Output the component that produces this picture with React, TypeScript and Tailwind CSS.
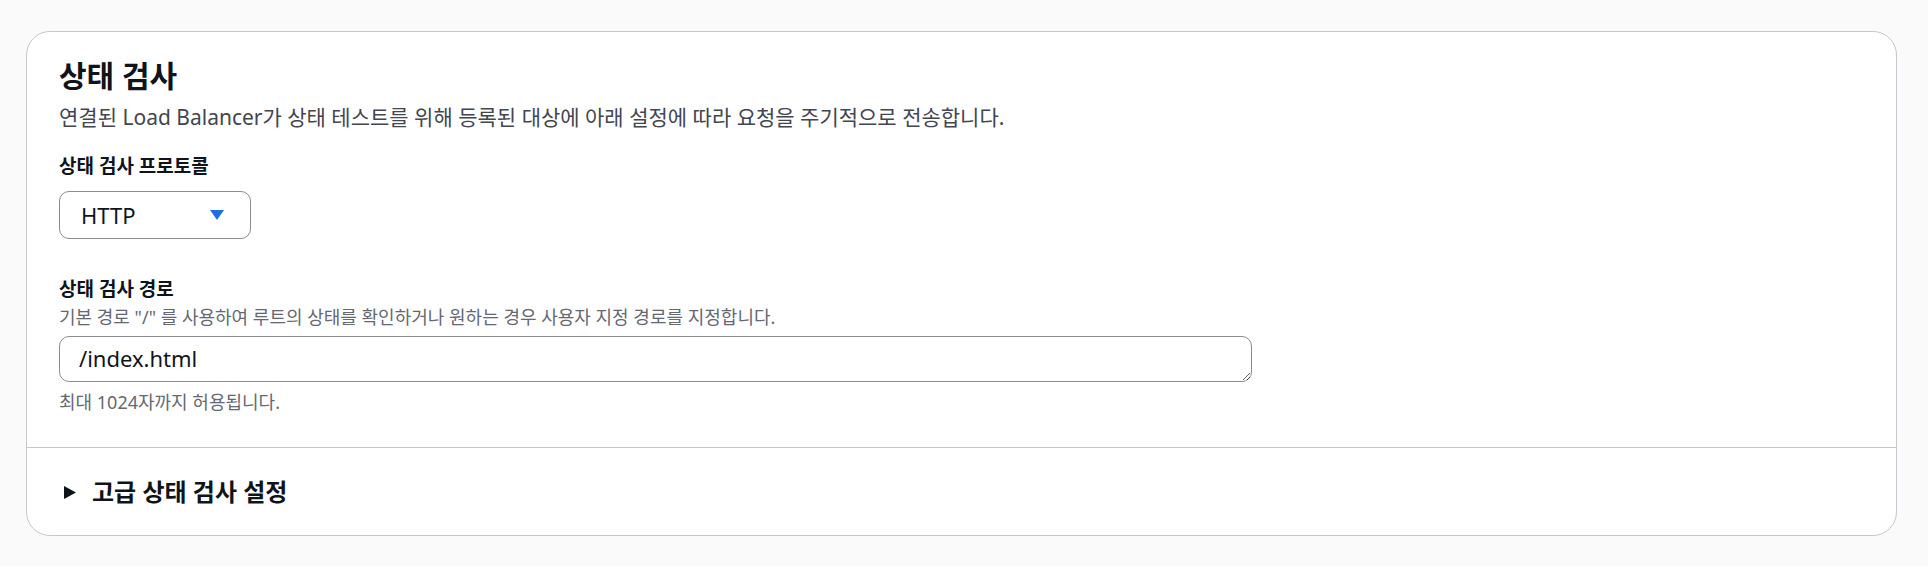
import React from 'react';

const font = { fontFamily: '"Noto Sans", "Noto Sans CJK KR", sans-serif' };

function Caret() {
  return (
    <svg width="16" height="12" viewBox="0 0 16 12" aria-hidden="true">
      <path d="M1 1h14L8 11z" fill="#1f6fe0" />
    </svg>
  );
}

function ExpandArrow() {
  return (
    <svg width="12" height="13" viewBox="0 0 12 13" aria-hidden="true">
      <path d="M0 0l12 6.5L0 13z" fill="#0f141a" />
    </svg>
  );
}

export default function App() {
  const [path, setPath] = React.useState('/index.html');
  const [open, setOpen] = React.useState(false);

  return (
    <div className="min-h-[566px] w-full bg-[#fafafa] px-[26px] pt-[31px]" style={font}>
      <div className="w-[1871px] rounded-[24px] border border-[#c6c6cd] bg-white">
        {/* Header + fields */}
        <div className="px-[32px] pt-[26px] pb-[33px]">
          <h2 className="text-[30px] font-bold leading-[36px] text-[#0f141a]">상태 검사</h2>
          <p className="mt-[9px] text-[21px] leading-[28px] text-[#424650]">
            연결된 Load Balancer가 상태 테스트를 위해 등록된 대상에 아래 설정에 따라 요청을 주기적으로 전송합니다.
          </p>

          {/* Protocol */}
          <div className="mt-[21px]">
            <label className="block text-[19px] font-bold leading-[28px] text-[#0f141a]">
              상태 검사 프로토콜
            </label>
            <div className="mt-[11px] flex h-[48px] w-[192px] items-center justify-between rounded-[10px] border border-[#8c8c94] pl-[21px] pr-[25px]">
              <span className="text-[22px] text-[#0f141a]">HTTP</span>
              <Caret />
            </div>
          </div>

          {/* Path */}
          <div className="mt-[36px]">
            <label className="block text-[19px] font-bold leading-[28px] text-[#0f141a]">
              상태 검사 경로
            </label>
            <p className="mt-[2px] text-[18px] leading-[24px] text-[#656871]">
              기본 경로 "/" 를 사용하여 루트의 상태를 확인하거나 원하는 경우 사용자 지정 경로를 지정합니다.
            </p>
            <textarea
              value={path}
              onChange={(e) => setPath(e.target.value)}
              rows={1}
              className="mt-[7px] block h-[46px] w-[1193px] rounded-[10px] border border-[#8c8c94] px-[19px] py-[5px] text-[22px] leading-[32px] text-[#0f141a] outline-none"
            />
            <p className="mt-[8px] text-[18px] leading-[24px] text-[#656871]">최대 1024자까지 허용됩니다.</p>
          </div>
        </div>

        {/* Advanced settings */}
        <div className="border-t border-[#c6c6cd] pl-[37px] pt-[29px] pb-[28px]">
          <button
            onClick={() => setOpen(!open)}
            className="flex items-center gap-[16px] text-[24px] font-bold leading-[30px] text-[#0f141a]"
          >
            <ExpandArrow />
            고급 상태 검사 설정
          </button>
        </div>
      </div>
    </div>
  );
}
